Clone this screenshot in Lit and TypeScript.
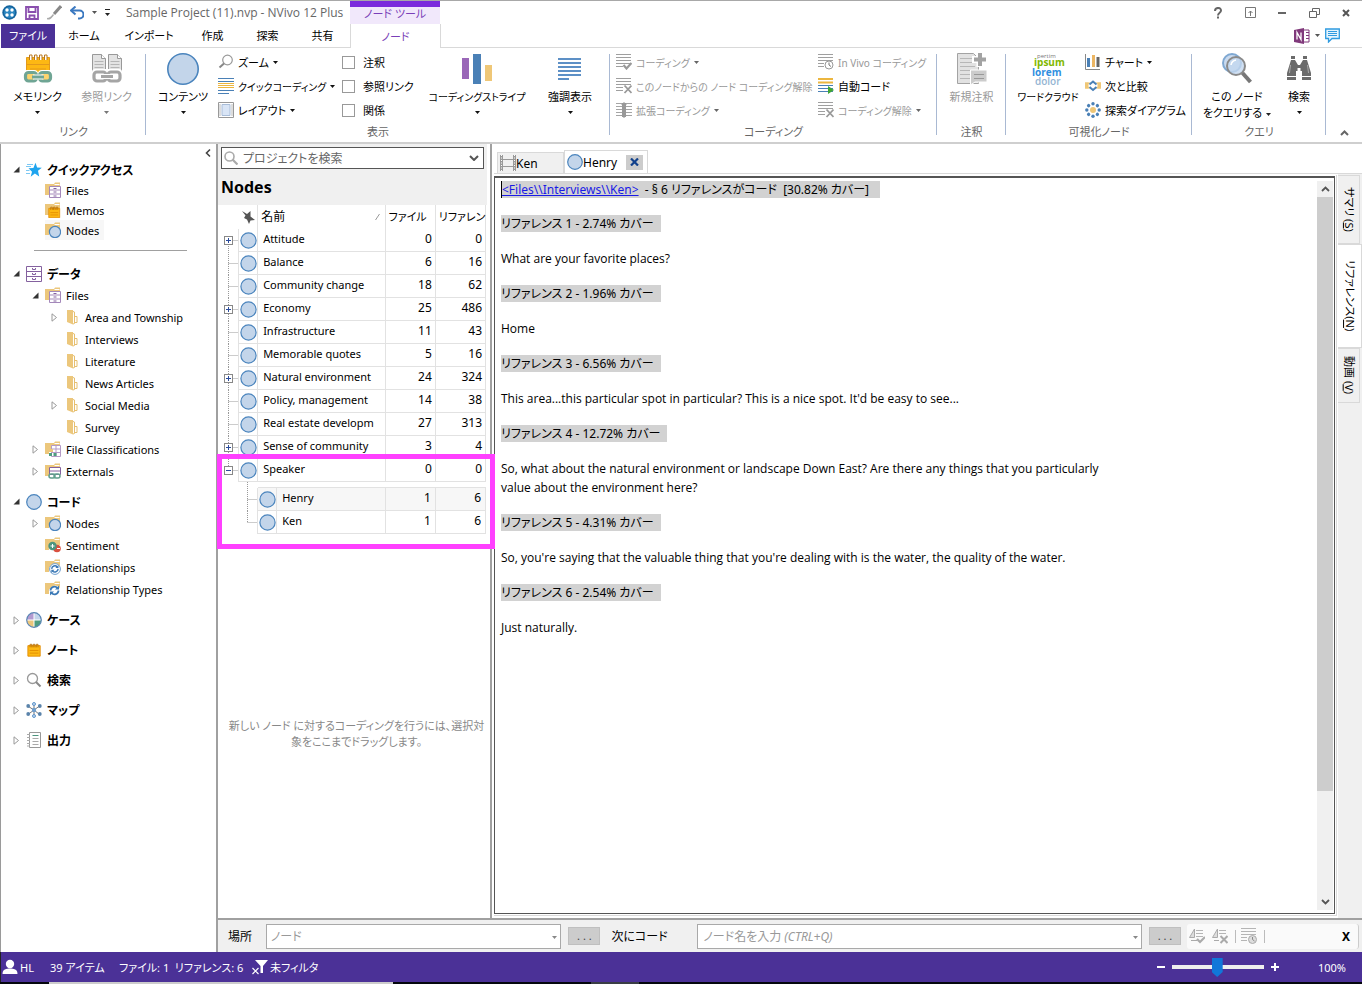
import { LitElement, html, svg, css, nothing } from "lit";
import type { TemplateResult } from "lit";
import { customElement, property, state } from "lit/decorators.js";
import { classMap } from "lit/directives/class-map.js";

const icon = (w: number, h: number, body: unknown, vb = `0 0 ${w} ${h}`) =>
  html`<svg width=${w} height=${h} viewBox=${vb} fill="none" aria-hidden="true">${body}</svg>`;

const lines = (ys: number[], x1: number, x2: number, color: string, w = 1) =>
  ys.map((y) => svg`<path d="M${x1} ${y}H${x2}" stroke=${color} stroke-width=${w} />`);

const folder = svg`<path d="M0 2h9l1-1.5h5V8H4v5H0z" fill="#ecc77c"/><path d="M9.500 2.500h5" stroke="#fff"/>`;
const cabinet = (c: string) => svg`
  <path d="M.5.5h15v15H.5zM.5 5.5h15M.5 10.5h15" fill="#fff" stroke=${c}/>
  <path d="M6.500 2v1.500h3V2M6.500 7v1.500h3V7M6.500 12v1.500h3V12" stroke=${c}/>`;
const circle = (r: number, c: number) =>
  svg`<circle cx=${c} cy=${c} r=${r} fill="#c3d5ea" stroke="#4a84bd" stroke-width="1.200"/>`;
const notepad = svg`
  <path d="M1 3h14v12H1z" fill="#fdb813" stroke="#e08a00"/>
  <path d="M3.500 5V1.500h2V5M7 5V1.500h2V5M10.500 5V1.500h2V5" stroke="#b86f00"/>
  <path d="M3 8.500h10M3 11.500h10" stroke="#e08a00"/>`;
const cycle = svg`
  <path d="M4 8a4 4 0 0 1 7-2.500M12 8a4 4 0 0 1-7 2.500" stroke="#3a78b5" stroke-width="1.800"/>
  <path d="M12.500 3v4h-4zM3.500 13V9h4z" fill="#3a78b5"/>`;

const ICONS: Record<string, () => TemplateResult> = {
  star: () => icon(16, 16, svg`
    <path d="M9.500.8l1.600 4.700 4.700.2-3.800 3 1.200 5.900-4.300-3-4.200 3.200 1.300-5L2.500 6.200l4.900-.3z" fill="#1fa4ee"/>
    <path d="M1 2.500h6M0 4.500h5M0 8.500h3.500M0 11.500h4" stroke="#7cc8f3"/>`),
  cabinet: () => icon(16, 16, cabinet("#84619f")),
  files: () => icon(16, 16, svg`${folder}<path d="M4.500 4.500h11v11h-11zM4.500 8h11M4.500 12h11" fill="#fff" stroke="#a488ba"/><path d="M8.500 6.500h3M8.500 10h3M8.500 14h3" stroke="#84619f"/>`),
  memos: () => icon(16, 16, svg`${folder}<g transform="translate(3 4) scale(.78)">${notepad}</g>`),
  nodes: () => icon(16, 16, svg`${folder}<g transform="translate(4 4)">${circle(5.6, 6)}</g>`),
  classes: () => icon(16, 16, svg`${folder}
    <path d="M6.500 4.500h9v11h-9zM6.500 8h9M6.500 11.500h9M11 4.500v11" fill="#fff" stroke="#b49ac6"/>
    <path d="M4 8h4v3H4z" fill="#ecc77c"/><path d="M4 12h3v3H4zM8.500 12h3v3h-3z" fill="#4f9d7f"/>`),
  externals: () => icon(16, 16, svg`${folder}
    <path d="M4.500 4.500h11v7h-11zM4.500 8h11" fill="#fff" stroke="#84619f"/>
    <rect x="4" y="11" width="6" height="4" rx="2" stroke="#5f9f8c" stroke-width="1.500"/>
    <rect x="9" y="11" width="6" height="4" rx="2" stroke="#5f9f8c" stroke-width="1.500"/>`),
  sentiment: () => icon(16, 16, svg`${folder}
    <circle cx="12" cy="11.500" r="3.800" fill="#d9503f"/><path d="M12 11.500h3" stroke="#fff"/>
    <circle cx="7.500" cy="9" r="4.200" fill="#4d957f"/><path d="M5.500 9h4M7.500 7v4" stroke="#fff"/>`),
  relations: () => icon(16, 16, svg`${folder}
    <circle cx="10" cy="10" r="5.400" fill="#fff" stroke="#6f9fce"/>
    <g transform="translate(3.500 3.500) scale(.8)">${cycle}</g>`),
  reltypes: () => icon(16, 16, svg`${folder}<circle cx="10" cy="10" r="5.500" fill="#fff"/>
    <g transform="translate(1.500 1.500)">${cycle}</g>`),
  folder: () => icon(12, 16, svg`
    <path d="M1 1h6v14.500L1 13z" fill="#ecc77c"/><path d="M7 2.500l1.500.5v11.500L7 15M8.500 7.500h2.500v6h-3" stroke="#e6bf6f"/>`),
  code: () => icon(16, 16, circle(7.3, 8)),
  cases: () => icon(16, 16, svg`
    <path d="M8 8V.7A7.300 7.300 0 0 0 .7 8z" fill="#b29ad0"/><path d="M8 8h7.300A7.300 7.300 0 0 0 8 .7z" fill="#c3d5ea"/>
    <path d="M8 8H.7A7.300 7.300 0 0 0 8 15.300z" fill="#ecc77c"/><path d="M8 8v7.300A7.300 7.300 0 0 0 15.300 8z" fill="#4f9d7f"/>
    <path d="M8 1v14M1 8h14" stroke="#fff"/><circle cx="8" cy="8" r="7.300" stroke="#5a86b5" stroke-width="1.200"/>`),
  note: () => icon(16, 16, svg`<g transform="translate(1 1) scale(.88)">${notepad}</g>`),
  search: () => icon(16, 16, svg`
    <circle cx="6.500" cy="6.500" r="5" stroke="#999" stroke-width="1.300"/><path d="M10 10l4.500 4.500" stroke="#888" stroke-width="2"/>`),
  map: () => icon(16, 16, svg`
    <path d="M8 8L2.500 4.500M8 8l5.500-4M8 8l-6 4.500M8 8l5.500 4.500M8 8V2.500M8 8v5.500" stroke="#777"/>
    <circle cx="8" cy="8" r="2.200" fill="#6f9fce"/>
    ${[[2.2, 4], [13.8, 4], [2.2, 12], [13.8, 12]].map(([x, y]) => svg`<circle cx=${x} cy=${y} r="1.900" fill="#5a83ab"/>`)}
    <circle cx="8" cy="2" r="1.500" fill="#c3d5ea" stroke="#5f97cd"/><circle cx="8" cy="14" r="1.500" fill="#c3d5ea" stroke="#5f97cd"/>`),
  output: () => icon(16, 16, svg`
    <path d="M3.500.5h11v15h-11z" fill="#fff" stroke="#999"/><path d="M1 2.500h3M1 5.500h3M1 8.500h3M1 11.500h3M1 14h3" stroke="#aaa"/>
    <path d="M6.500 3.500h6" stroke="#4d957f"/><path d="M6.500 6.500h6M6.500 9.500h6M6.500 12.500h6" stroke="#aaa"/>`),

  memoLink: () => icon(32, 32, svg`
    <path d="M4.500 4.500h23v18h-23z" fill="#fdb813" stroke="#e39a1b"/>
    <path d="M4.500 11.500h23M8 16h16" stroke="#e39a1b"/>
    ${[7.5, 12.5, 17.5, 22.5].map((x) => svg`<path d="M${x} 7V2h2.500v5" stroke="#b87820" fill="#fff"/>`)}
    <rect x="1" y="17" width="15" height="13" rx="4" fill="#fff"/><rect x="16" y="17" width="15" height="13" rx="4" fill="#fff"/>
    <rect x="3.500" y="19.500" width="11" height="8.500" rx="3" fill="#fdd46e" stroke="#6fa594" stroke-width="3.200"/>
    <rect x="17.500" y="19.500" width="11" height="8.500" rx="3" fill="#fdd46e" stroke="#6fa594" stroke-width="3.200"/>
    <path d="M11 24h10.500" stroke="#fff" stroke-width="5"/><path d="M10 24h12" stroke="#6fa594" stroke-width="3"/>`),
  seeAlso: () => icon(32, 32, svg`
    ${[1.5, 17.5].map((x) => svg`<path d="M${x} 1.500h9l4 4v18h-13z" fill="#e3e3e3" stroke="#999"/>
      <path d="M${x + 9} 1.500v4h4" stroke="#999" fill="#fff"/>
      <path d="M${x + 2} 8.500h9M${x + 2} 11.500h9M${x + 2} 14.500h9" stroke="#b5b5b5"/>`)}
    <rect x="1" y="16" width="30" height="15" rx="3" fill="#fff"/>
    <rect x="3" y="19" width="12" height="9" rx="3" stroke="#a5a5a5" stroke-width="3.200"/>
    <rect x="17" y="19" width="12" height="9" rx="3" stroke="#a5a5a5" stroke-width="3.200"/>
    <path d="M11 23.500h10" stroke="#fff" stroke-width="5"/><path d="M10 23.500h12" stroke="#a5a5a5" stroke-width="3"/>`),
  content: () => icon(32, 32, svg`<circle cx="16" cy="16" r="15.200" fill="#c3d5ea" stroke="#4a84bd" stroke-width="1.600"/>`),
  stripes: () => icon(32, 32, svg`
    <path d="M1 5h7v21H1z" fill="#9a67b8"/><path d="M12 1h8v30h-8z" fill="#4a80b6"/><path d="M24 12h7v16h-7z" fill="#efc777"/>`),
  highlight: () => icon(24, 32, svg`${lines([6, 10, 14, 18, 22], 0, 23, "#5d90c6", 2)}<path d="M0 26h11" stroke="#5d90c6" stroke-width="2"/>`),
  newAnno: () => icon(32, 32, svg`
    <path d="M1.500.5h16l5 5v25h-21z" fill="#e2e2e2" stroke="#a3a3a3"/>
    ${lines([5.5, 9.5, 13.5, 17.5, 21.5, 25.5], 4, 19, "#b7b7b7")}
    <path d="M24 -1v15M16 6.500h15" stroke="#fff" stroke-width="7"/><path d="M24 0v13M18 6.500h12" stroke="#a3a3a3" stroke-width="4"/>
    <path d="M14.500 17h16.500v12H19l-4.500 3z" fill="#ccc" stroke="#fff"/>${lines([21.5, 25.5], 18, 28, "#999")}`),
  cloud: () => html`<svg class="spill" width="34" height="34" viewBox="0 0 34 34" aria-hidden="true">
    <text font-family="Open Sans, sans-serif" font-size="10" font-weight="700">
      <tspan x="6" y="5" font-size="6" font-weight="400" fill="#777">pertim</tspan><tspan x="3" y="13" fill="#7fb800">ipsum</tspan><tspan x="1" y="23" fill="#2f8fe0">lorem</tspan><tspan x="4" y="32" font-weight="600" fill="#93b4d2">dolor</tspan>
    </text></svg>`,
  query: () => icon(32, 32, svg`
    <circle cx="11" cy="10" r="9" fill="#c9daef" stroke="#7fa8d2" stroke-width="2"/>
    <circle cx="15" cy="13" r="9" fill="#c3d7ef" fill-opacity=".8" stroke="#8a8a8a" stroke-width="2"/>
    <path d="M10 12a6 6 0 0 1 5-5" stroke="#fff" stroke-width="1.500"/><path d="M21.500 20l8 9" stroke="#777" stroke-width="4"/>`),
  binoculars: () => icon(32, 32, svg`
    <path d="M8 3h4v4l3 5h2l3-5V3h4v4l4 13v7h-9v-9h-1.500v-3h-3v3H13v9H4v-7l4-13z" fill="#6b6b6b"/>
    <path d="M7.500 6.500h5M19.500 6.500h5M4 23.500h9M19 23.500h9" stroke="#fff"/><path d="M7.500 12l-1 8M24.500 12l1 8" stroke="#aaa"/>`),

  zoom: () => icon(16, 16, svg`
    <circle cx="9.500" cy="6" r="4.800" stroke="#999" stroke-width="1.200"/><path d="M6 9.500l-4.500 4" stroke="#888" stroke-width="2"/>`),
  quick: () => icon(16, 16, svg`${lines([.5, 3.5, 12.5], 0, 16, "#4a80b6")}${lines([5.5, 7.5, 9.5], 0, 16, "#ecb63f")}<path d="M0 15.500h11" stroke="#4a80b6"/>`),
  layout: () => icon(16, 16, svg`<path d="M.5.500h15v15H.5z" fill="#fff" stroke="#999"/><path d="M4 2.500h8v11H4z" fill="#d9e5f6" stroke="#a9bdd8"/><path d="M2 2v12M14 2v12" stroke="#bbb"/>`),
  grayCheck: () => icon(16, 16, svg`${lines([.5, 3.5, 6.5, 9.5], 0, 15, "#9f9f9f")}<path d="M0 12.500h7" stroke="#9f9f9f"/><path d="M7.500 11l3 3.500L15.500 9" stroke="#999" stroke-width="2.200"/>`),
  grayX: () => icon(16, 16, svg`${lines([.5, 3.5, 6.5], 0, 15, "#9f9f9f")}<path d="M0 9.500h7M0 12.500h7" stroke="#9f9f9f"/><path d="M8.500 7.500l7 7.500M15.500 7.500l-7 7.500" stroke="#999" stroke-width="1.800"/>`),
  spread: () => icon(16, 16, svg`${lines([1.5, 4.5, 7.5, 10.5, 13.5], 0, 16, "#a5a5a5")}<path d="M8 1v14" stroke="#999" stroke-width="4"/><path d="M5 3l3-3 3 3zM5 13l3 3 3-3z" fill="#999"/>`),
  invivo: () => icon(16, 16, svg`${lines([.5, 3.5, 6.5], 0, 15, "#9f9f9f")}<path d="M0 9.500h6M0 12.500h6" stroke="#9f9f9f"/><circle cx="11" cy="11" r="4" fill="#fff" stroke="#999"/><path d="M11 8.500V11l2 1.500" stroke="#777"/>`),
  autocode: () => icon(16, 16, svg`${lines([1, 4.5], 0, 15, "#ecb63f", 2)}${lines([7.5, 10.5, 13.5], 0, 15, "#4a80b6")}<path d="M10 8l6 4-6 4z" fill="#3fa535"/>`),
  chart: () => icon(16, 16, svg`<path d="M.5 0v15.500H15" stroke="#888"/><path d="M2 4h3v9H2z" fill="#4a80b6"/><path d="M7 1h3v12H7z" fill="#ecb663"/><path d="M11.500 3h3v10h-3z" fill="#666"/>`),
  compare: () => icon(16, 16, svg`<path d="M0 4.500h6v6H0zM10 4.500h6v6h-6z" fill="#efc777"/><path d="M8 2l6 5.500L8 13 2 7.500z" fill="#fff"/><path d="M0 4.500h3.500v6H0zM12.500 4.500H16v6h-3.500z" fill="#efc777"/><path d="M4.500 6.500L8 3.500l3.500 3M4.500 9L8 12l3.500-3" stroke="#4a80b6" stroke-width="2"/>`),
  explore: () => icon(16, 16, svg`<circle cx="8" cy="8" r="3" fill="#efc777"/>
    ${[0, 45, 90, 135, 180, 225, 270, 315].map((a) => svg`<circle cx="8" cy="1.800" r="1.700" fill="#4a80b6" transform="rotate(${a} 8 8)"/>`)}`),
  person: () => icon(16, 16, svg`<circle cx="8" cy="5" r="4.200" fill="#fff"/><path d="M.5 15c0-5 4-5.500 7.500-5.500s7.500.5 7.500 5.500z" fill="#fff"/>`),
  filter: () => icon(16, 16, svg`<path d="M3 1h13l-5 6v7H8.500V7z" fill="#fff"/><path d="M.5 9l6 6M6.500 9l-6 6" stroke="#fff" stroke-width="1.200"/>`),
  film: () => icon(16, 16, svg`<path d="M1.500 0v16M14.500 0v16" stroke="#999" stroke-width="3"/><path d="M1.500 0v16M14.500 0v16" stroke="#fff" stroke-dasharray="1 1.500"/><path d="M3 4.500h10M3 11.500h10" stroke="#999"/>`),
  barCheck: () => icon(16, 16, svg`<path d="M.5 9.500L5.500 1v8.500z" stroke="#aaa" fill="#ddd"/>${lines([2.5, 5.5, 8.5], 7, 14, "#b5b5b5")}<path d="M2 12.500h6" stroke="#aaa"/><path d="M8 11l3 3 5-5" stroke="#aaa" stroke-width="2.200"/>`),
  barX: () => icon(16, 16, svg`<path d="M.5 9.500L5.500 1v8.500z" stroke="#aaa" fill="#ddd"/>${lines([2.5, 5.5], 7, 14, "#b5b5b5")}<path d="M2 12.500h5" stroke="#aaa"/><path d="M8.500 8l7 7M15.500 8l-7 7" stroke="#aaa" stroke-width="2"/>`),
  barVivo: () => icon(16, 16, svg`${lines([.5, 3.5, 6.5], 0, 15, "#b5b5b5")}<path d="M0 9.500h6M0 12.500h6" stroke="#b5b5b5"/><circle cx="11.500" cy="11.500" r="4" fill="#ddd" stroke="#aaa"/><path d="M11.500 9v2.500l2 1.500" stroke="#888"/>`),
};

const down = (c = "#222") => html`<svg width="5" height="3" viewBox="0 0 5 3" aria-hidden="true"><path d="M0 0h5L2.500 3z" fill=${c} /></svg>`;

const base = css`
  :host { display: block; box-sizing: border-box; }
  * { box-sizing: border-box; }
  svg { display: block; flex: none; }
  button, input, select {
    font: inherit; color: inherit; margin: 0; padding: 0; border: 0; background: none;
    font-feature-settings: inherit; border-radius: 0;
  }
`;

/* ---------- Title bar and tabs ---------- */
@customElement("title-area")
class TitleArea extends LitElement {
  static styles = [base, css`
    .title { display: flex; height: 24px; border-top: 1px solid #a8a8a8; }
    .quick { display: flex; align-items: center; width: 350px; padding-left: 2px; }
    .quick button { display: flex; margin-right: 8px; }
    .name { color: #666; font-family: "Open Sans", sans-serif; font-size: 12px; margin-left: 8px; white-space: nowrap; }
    .context { width: 90px; border-top: 6px solid #7b2bdc; background: #f1e8fb; color: #7a3fb8; text-align: center; line-height: 13px; }
    .win { display: flex; margin-left: auto; }
    .win button { width: 32px; display: grid; place-items: center; }
    .tabs { display: flex; height: 24px; padding-left: 1px; }
    .tabs button { border-bottom: 1px solid #d9d9d9; line-height: 23px; white-space: nowrap; }
    .tabs .file { width: 54px; background: #4b3197; color: #fff; border-color: #4b3197; }
    .t58 { width: 58px; } .t72 { width: 72px; } .t55 { width: 55px; }
    .tabs .on { width: 91px; color: #7a3fb8; border: 1px solid #d9d9d9; border-width: 0 1px; }
    .rest { flex: 1; border-bottom: 1px solid #d9d9d9; display: flex; justify-content: flex-end; align-items: center; gap: 5px; padding-right: 22px; }
    .rest button { border: 0; }
  `];
  render() {
    return html`
      <div class="title">
        <div class="quick">
          <button aria-label="NVivo">${icon(15, 15, svg`<circle cx="7.500" cy="7.500" r="7.200" fill="#14649e"/><circle cx="7.500" cy="7.500" r="5.500" fill="#2b86c0"/>
            ${[[5, 5], [10, 5], [5, 10], [10, 10]].map(([x, y]) => svg`<circle cx=${x} cy=${y} r="1.700" fill="#fff"/>`)}`)}</button>
          <button aria-label="保存">${icon(14, 14, svg`<path d="M1 1h12v12H1zM3.500 1v5h7V1M4.500 13V9.500h5V13" stroke="#8a4fae" stroke-width="1.800"/>`)}</button>
          <button aria-label="編集">${icon(15, 15, svg`<path d="M14 1L7 9" stroke="#888" stroke-width="3"/><path d="M0 13.500c3 1 4-1 6.500-4" stroke="#aaa" stroke-width="1.500"/>`)}</button>
          <button aria-label="元に戻す">${icon(14, 14, svg`<path d="M1 4.500h8.500a4 4 0 0 1 0 8H8" stroke="#3a78c0" stroke-width="2"/><path d="M5.500.5L1 4.500l4.500 4" stroke="#3a78c0" stroke-width="2"/>`)}</button>
          <button aria-label="履歴">${down("#555")}</button>
          <button aria-label="カスタマイズ">${icon(5, 7, svg`<path d="M0 .5h5" stroke="#222"/><path d="M0 4h5L2.500 7z" fill="#222"/>`)}</button>
          <span class="name">Sample Project (11).nvp - NVivo 12 Plus</span>
        </div>
        <div class="context">ノード ツール</div>
        <div class="win">
          <button aria-label="ヘルプ">${icon(10, 12, svg`<path d="M2 4c0-4 6-4 6-.5C8 6 5 5.500 5 8.500M5 9.500v2" stroke="#666" stroke-width="2"/>`)}</button>
          <button aria-label="リボン表示">${icon(11, 11, svg`<path d="M.5.5h10v10H.5zM5.500 9V4M3.500 6l2-2 2 2" stroke="#777"/>`)}</button>
          <button aria-label="最小化">${icon(8, 2, svg`<path d="M0 1h8" stroke="#666" stroke-width="2"/>`)}</button>
          <button aria-label="元のサイズ">${icon(11, 10, svg`<path d="M3.500 3V.5h7v6H8M.5 3.500h7v6h-7z" stroke="#666"/>`)}</button>
          <button aria-label="閉じる">${icon(8, 8, svg`<path d="M1 1l6 6M7 1L1 7" stroke="#555" stroke-width="2"/>`)}</button>
        </div>
      </div>
      <div class="tabs">
        <button class="file">ファイル</button><button class="t58">ホーム</button><button class="t72">インポート</button>
        <button class="t55">作成</button><button class="t55">探索</button><button class="t55">共有</button><button class="on">ノード</button>
        <div class="rest">
          <button aria-label="OneNote">${icon(16, 16, svg`<path d="M9 2h6v12H9z" fill="#fff" stroke="#80397b"/><path d="M12 4.500h3M12 7.500h3M12 10.500h3" stroke="#80397b"/><path d="M0 2l10-2v16L0 14z" fill="#80397b"/><path d="M3 11.500v-7l4 7v-7" stroke="#fff" stroke-width="1.300"/>`)}</button>
          ${down("#555")}
          <button aria-label="コメント">${icon(15, 15, svg`<path d="M.7 1h13.600v9.500H7l-3.500 3.500v-3.500H.7z" stroke="#2f9be0" fill="#e6f4fd" stroke-width="1.300"/><path d="M3 3.500h9M3 5.500h9M3 7.500h9" stroke="#2f9be0"/>`)}</button>
        </div>
      </div>`;
  }
}

/* ---------- Ribbon ---------- */
type Opts = { off?: boolean; menu?: boolean; dense?: boolean };
const big = (ic: string, label: unknown, { off = false, menu = true, dense = false }: Opts = {}) => html`
  <button class=${classMap({ big: true, off, dense })} ?disabled=${off}>
    <span class="pic">${ICONS[ic]()}</span><span class="lab">${label}</span>
    ${menu ? down(off ? "#777" : "#111") : nothing}
  </button>`;
const small = (ic: string, label: string, { off = false, menu = false, dense = false }: Opts = {}) => html`
  <button class=${classMap({ small: true, off, dense })} ?disabled=${off}>
    ${ICONS[ic]()}<span>${label}</span>${menu ? down(off ? "#666" : "#111") : nothing}
  </button>`;

@customElement("ribbon-bar")
class RibbonBar extends LitElement {
  static styles = [base, css`
    :host { border-bottom: 2px solid #cfcfcf; padding-left: 1px; }
    .groups { display: grid; grid-template-columns: 145px 464px 327px 69px 186px 134px 1fr; height: 94px; }
    .group { display: grid; grid-template-rows: 74px 18px; padding-top: 2px; position: relative; min-width: 0; }
    .group::after { content: ""; position: absolute; right: 0; top: 6px; height: 81px; border-right: 1px solid #a9b9d3; }
    .cap { text-align: center; color: #666; line-height: 16px; }
    .body { display: grid; white-space: nowrap; }
    .link { grid-template-columns: 69px 69px; padding-left: 2px; }
    .view { grid-template-columns: 67px 124px 82px 106px 80px; padding-left: 5px; }
    .coding { grid-template-columns: 202px 1fr; padding-left: 6px; }
    .vis { grid-template-columns: 74px 1fr; padding-left: 5px; }
    .query { grid-template-columns: 78px 46px; padding-left: 6px; }
    .big { display: flex; flex-direction: column; align-items: center; padding-top: 3px; }
    .view .big:first-child { width: 64px; }
    .pic { height: 36px; display: grid; place-items: start center; }
    .spill { overflow: visible; }
    .lab { line-height: 16px; height: 22px; text-align: center; }
    .two { margin-left: 4px; display: inline-block; vertical-align: middle; }
    .off { color: #999; }
    .dense { font-size: 10px; }
    .col { display: grid; grid-template-rows: repeat(3, 24px); }
    .small, .check { display: flex; align-items: center; gap: 4px; text-align: left; }
    .check { gap: 8px; }
    .check input { appearance: none; width: 13px; height: 13px; border: 1px solid #999; background: #fff; flex: none; }
    .end { display: flex; align-items: flex-end; justify-content: flex-end; padding: 0 12px 6px; }
    .end button { width: 10px; }
  `];
  render() {
    return html`<div class="groups">
      <section class="group"><div class="body link">
        ${big("memoLink", "メモリンク")}${big("seeAlso", "参照リンク", { off: true })}
      </div><div class="cap">リンク</div></section>
      <section class="group"><div class="body view">
        ${big("content", "コンテンツ")}
        <div class="col">${small("zoom", "ズーム", { menu: true })}${small("quick", "クイックコーディング", { menu: true, dense: true })}${small("layout", "レイアウト", { menu: true })}</div>
        <div class="col">${["注釈", "参照リンク", "関係"].map((t) => html`<label class="check"><input type="checkbox">${t}</label>`)}</div>
        ${big("stripes", "コーディングストライプ", { dense: true })}${big("highlight", "強調表示")}
      </div><div class="cap">表示</div></section>
      <section class="group"><div class="body coding">
        <div class="col">${small("grayCheck", "コーディング", { off: true, menu: true, dense: true })}${small("grayX", "このノードからの ノード コーディング解除", { off: true, dense: true })}${small("spread", "拡張コーディング", { off: true, menu: true, dense: true })}</div>
        <div class="col">${small("invivo", "In Vivo コーディング", { off: true, dense: true })}${small("autocode", "自動コード")}${small("grayX", "コーディング解除", { off: true, menu: true, dense: true })}</div>
      </div><div class="cap">コーディング</div></section>
      <section class="group"><div class="body">${big("newAnno", "新規注釈", { off: true, menu: false })}</div><div class="cap">注釈</div></section>
      <section class="group"><div class="body vis">
        ${big("cloud", "ワードクラウド", { menu: false, dense: true })}
        <div class="col">${small("chart", "チャート", { menu: true })}${small("compare", "次と比較")}${small("explore", "探索ダイアグラム")}</div>
      </div><div class="cap">可視化ノード</div></section>
      <section class="group"><div class="body query">
        ${big("query", html`この ノード<br>をクエリする<span class="two">${down()}</span>`, { menu: false })}
        ${big("binoculars", "検索")}
      </div><div class="cap">クエリ</div></section>
      <div class="end"><button aria-label="リボンを折りたたむ">${icon(9, 6, svg`<path d="M1 5l3.500-3.500L8 5" stroke="#666" stroke-width="2"/>`)}</button></div>
    </div>`;
  }
}

/* ---------- Navigation ---------- */
type Item = { t: string; ic: string; lv: number; ex?: "open" | "closed"; on?: boolean };
const QUICK: Item[] = [
  { t: "Files", ic: "files", lv: 1 }, { t: "Memos", ic: "memos", lv: 1 }, { t: "Nodes", ic: "nodes", lv: 1, on: true },
];
const DATA: Item[] = [
  { t: "Files", ic: "files", lv: 1, ex: "open" },
  { t: "Area and Township", ic: "folder", lv: 2, ex: "closed" }, { t: "Interviews", ic: "folder", lv: 2 },
  { t: "Literature", ic: "folder", lv: 2 }, { t: "News Articles", ic: "folder", lv: 2 },
  { t: "Social Media", ic: "folder", lv: 2, ex: "closed" }, { t: "Survey", ic: "folder", lv: 2 },
  { t: "File Classifications", ic: "classes", lv: 1, ex: "closed" }, { t: "Externals", ic: "externals", lv: 1, ex: "closed" },
];
const CODES: Item[] = [
  { t: "Nodes", ic: "nodes", lv: 1, ex: "closed" }, { t: "Sentiment", ic: "sentiment", lv: 1 },
  { t: "Relationships", ic: "relations", lv: 1 }, { t: "Relationship Types", ic: "reltypes", lv: 1 },
];
const REST = [["ケース", "cases"], ["ノート", "note"], ["検索", "search"], ["マップ", "map"], ["出力", "output"]];

const arrow = (ex?: "open" | "closed") =>
  ex === "open" ? icon(7, 7, svg`<path d="M6.500.5v6h-6z" fill="#333"/>`)
  : ex === "closed" ? icon(7, 9, svg`<path d="M1 .8v7.400L5.500 4.500z" stroke="#999" fill="#fff"/>`) : nothing;

@customElement("nav-pane")
class NavPane extends LitElement {
  static styles = [base, css`
    :host { position: relative; padding-top: 15px; border-left: 1px solid #9a9a9a; border-right: 2px solid #a0a0a0; background: #fff; overflow: hidden; }
    .fold { position: absolute; right: 5px; top: 4px; }
    .head, .item { display: flex; align-items: center; width: 100%; white-space: nowrap; }
    .head { font-weight: 700; font-size: 12px; height: 21px; padding-left: 12px; }
    .tall { height: 30px; }
    .tw { width: 7px; margin-right: 6px; flex: none; display: grid; place-items: center; }
    .head span:last-child { margin-left: 5px; }
    .item { height: 22px; padding-left: 31px; }
    .item .nm { padding: 0 5px; }
    .quick .item { height: 20px; }
    .on .bg { background: #f7f7f7; }
    .bg { display: flex; align-items: center; height: 20px; }
    .lv2 { padding-left: 50px; }
    .lv2 .bg { padding-left: 2px; }
    .lv2 .nm { padding-left: 7px; }
    hr { margin: 10px 29px 12px 33px; border: 0; border-top: 1px solid #a0a0a0; }
    .code { margin-top: 9px; }
    .rest { margin-top: 5px; }
  `];
  head(t: string, ic: string, ex: "open" | "closed", tall = false) {
    return html`<button class=${classMap({ head: true, tall })}><span class="tw">${arrow(ex)}</span>${ICONS[ic]()}<span>${t}</span></button>`;
  }
  item(i: Item) {
    return html`<button class=${classMap({ item: true, lv2: i.lv === 2, on: !!i.on })}><span class="tw">${arrow(i.ex)}</span>
      <span class="bg">${ICONS[i.ic]()}<span class="nm">${i.t}</span></span></button>`;
  }
  render() {
    return html`
      <button class="fold" aria-label="折りたたむ">${icon(6, 10, svg`<path d="M5 1.500L1.500 5 5 8.500" stroke="#444" stroke-width="1.600"/>`)}</button>
      <div class="quick">${this.head("クイックアクセス", "star", "open")}${QUICK.map((i) => this.item(i))}</div>
      <hr>
      <div>${this.head("データ", "cabinet", "open")}${DATA.map((i) => this.item(i))}</div>
      <div class="code">${this.head("コード", "code", "open")}${CODES.map((i) => this.item(i))}</div>
      <div class="rest">${REST.map(([t, ic]) => this.head(t, ic, "closed", true))}</div>`;
  }
}

/* ---------- Node list ---------- */
type NodeRow = { n: string; f: number; r: number; box?: "plus" | "minus" };
const NODES: NodeRow[] = [
  { n: "Attitude", f: 0, r: 0, box: "plus" }, { n: "Balance", f: 6, r: 16 }, { n: "Community change", f: 18, r: 62 },
  { n: "Economy", f: 25, r: 486, box: "plus" }, { n: "Infrastructure", f: 11, r: 43 }, { n: "Memorable quotes", f: 5, r: 16 },
  { n: "Natural environment", f: 24, r: 324, box: "plus" }, { n: "Policy, management", f: 14, r: 38 },
  { n: "Real estate developm", f: 27, r: 313 }, { n: "Sense of community", f: 3, r: 4, box: "plus" },
  { n: "Speaker", f: 0, r: 0, box: "minus" },
];
const dot = icon(17, 17, svg`<circle cx="8.500" cy="8.500" r="7.600" fill="#c3d5ea" stroke="#4a84bd" stroke-width="1.200"/>`);

@customElement("node-list")
class NodeList extends LitElement {
  @property({ attribute: false }) rows: NodeRow[] = NODES;
  static styles = [base, css`
    :host { position: relative; border-right: 2px solid #a0a0a0; background: #fff; min-width: 0; }
    .top { background: #f0f0f0; height: 61px; padding: 3px 3px 0; margin-right: 3px; }
    .search { display: flex; align-items: center; height: 22px; border: 1px solid #555; background: #fff; padding: 0 4px 0 2px; }
    .search input { flex: 1; min-width: 0; padding-left: 5px; outline: 0; font-size: 12px; }
    .search input::placeholder { color: #666; opacity: 1; }
    h2 { margin: 0; font-size: 16px; line-height: 36px; font-weight: 700; }
    table { border-spacing: 0; table-layout: fixed; width: 268px; line-height: 18px; }
    .c21 { width: 21px; } .c19 { width: 19px; } .c108 { width: 108px; } .c50 { width: 50px; }
    th { font-weight: 400; text-align: left; height: 24px; padding: 0 0 0 3px; border-right: 1px solid #e2e2e2; white-space: nowrap; }
    th.bare { border: 0; padding: 0; }
    .name { display: flex; align-items: center; justify-content: space-between; padding-right: 5px; font-size: 12px; }
    td { height: 23px; padding: 0; border-right: 1px solid #e2e2e2; border-bottom: 1px solid #e2e2e2; }
    td.n { padding: 0 0 2px 5px; white-space: nowrap; }
    td.v { text-align: right; padding: 0 3px 2px 0; font-size: 12px; }
    td.tree { border-bottom: 0; vertical-align: top; }
    td.tree svg { overflow: visible; }
    td.dot svg { margin: auto; }
    .gap td { height: 6px; border-right: 0; }
    .gap .tree, .sub .none { border: 0; }
    .sub .sel { background: #f7f7f7; }
    .sub .v { padding-right: 4px; }
    .hint { color: #888; text-align: center; line-height: 16px; padding: 184px 3px 0 8px; white-space: nowrap; }
    .mark { position: absolute; left: -1px; right: -5px; top: 310px; height: 95px; border: 5px solid #ff40ff; z-index: 2; }
  `];
  tree(n: NodeRow, i: number) {
    const top = i === 0 ? 11 : 0, bottom = i === this.rows.length - 1 ? 11 : 23;
    return icon(20, 23, svg`
      <path d="M10.500 ${top}V${bottom}M10.500 11.500h9" stroke="#999" stroke-dasharray="1 1"/>
      ${n.box ? svg`<rect x="6.500" y="7.500" width="8" height="8" fill="#fff" stroke="#888"/><path d="M8 11.500h5${n.box === "plus" ? "M10.500 9v5" : ""}" stroke="#2a4b9b"/>` : nothing}`);
  }
  sub(n: string, sel: boolean) {
    const c = sel ? "sel" : "";
    return html`<tr class="sub"><td class="none"></td>
      <td class="tree">${icon(18, 23, svg`<path d="M8.500 ${sel ? -6 : 0}V${sel ? 23 : 11}M8.500 11.500h9" stroke="#999" stroke-dasharray="1 1"/>`)}</td>
      <td class="dot ${c}">${dot}</td><td class="n ${c}">${n}</td><td class="v ${c}">1</td><td class="v ${c}">6</td></tr>`;
  }
  render() {
    return html`
      <div class="top">
        <div class="search">${icon(14, 14, svg`<circle cx="5.500" cy="5.500" r="4.500" stroke="#aaa" stroke-width="1.600"/><path d="M8.500 8.500l5 5" stroke="#aaa" stroke-width="2.200"/>`)}
          <input type="text" aria-label="プロジェクトを検索" placeholder="プロジェクトを検索">
          ${icon(10, 6, svg`<path d="M1 1l4 4 4-4" stroke="#555" stroke-width="2"/>`)}</div>
        <h2>Nodes</h2>
      </div>
      <table>
        <colgroup><col class="c21"><col class="c19"><col class="c19"><col class="c108"><col class="c50"><col class="c50"></colgroup>
        <thead><tr><th class="bare"></th><th aria-label="種類">${icon(13, 14, svg`<path d="M0 1l5 3 3.500-3v5.500L13 10l-4.500.5L7 14l-2-4.500L2 8l1.500-2.500z" fill="#555"/>`)}</th>
          <th colspan="2"><span class="name">名前${icon(5, 6, svg`<path d="M4.500 0l-4 6" stroke="#999"/>`)}</span></th><th>ファイル</th><th>リファレン</th></tr></thead>
        <tbody>
          ${this.rows.map((n, i) => html`<tr><td class="tree">${this.tree(n, i)}</td><td class="dot">${dot}</td>
            <td class="n" colspan="2">${n.n}</td><td class="v">${n.f}</td><td class="v">${n.r}</td></tr>`)}
          <tr class="gap"><td class="tree"></td><td class="tree"></td><td colspan="4"></td></tr>
          ${this.sub("Henry", true)}${this.sub("Ken", false)}
        </tbody>
      </table>
      <div class="hint">新しい ノード に対するコーディングを行うには、選択対<br>象をここまでドラッグします。</div>
      <div class="mark"></div>`;
  }
}

/* ---------- Detail view ---------- */
const REFS: [string, string[]][] = [
  ["リファレンス 1 - 2.74% カバー", ["What are your favorite places?"]],
  ["リファレンス 2 - 1.96% カバー", ["Home"]],
  ["リファレンス 3 - 6.56% カバー", ["This area...this particular spot in particular? This is a nice spot. It'd be easy to see..."]],
  ["リファレンス 4 - 12.72% カバー", ["So, what about the natural environment or landscape Down East? Are there any things that you particularly", "value about the environment here?"]],
  ["リファレンス 5 - 4.31% カバー", ["So, you're saying that the valuable thing that you're dealing with is the water, the quality of the water."]],
  ["リファレンス 6 - 2.54% カバー", ["Just naturally."]],
];

@customElement("detail-view")
class DetailView extends LitElement {
  @state() private tab = "リファレンス";
  static styles = [base, css`
    :host { display: grid; grid-template: 30px 1fr / 1fr 25px; min-width: 0; background: #fff; padding-left: 2px; }
    .tabs { grid-column: 1 / 3; display: flex; align-items: flex-end; border-bottom: 1px solid #d9d9d9; padding-left: 3px; font-size: 12px; }
    .tab { display: flex; align-items: center; border: 1px solid #d9d9d9; border-bottom: 0; height: 21px; background: #f0f0f0; width: 67px; padding-left: 2px; }
    .tab.on { height: 23px; width: 84px; background: #fff; padding: 0 4px 0 2px; }
    .tab.on button:last-child { margin-left: auto; width: 17px; height: 15px; background: #ccc; display: grid; place-items: center; }
    .tab button { display: flex; align-items: center; }
    .frame { border: 1px solid #d9d9d9; border-width: 0 1px 1px 0; margin: 1px 0 2px; padding: 1px 1px 1px 0; background: #fff; display: grid; min-height: 0; }
    .doc { border: 1px solid #555; border-top-width: 2px; display: grid; grid-template-columns: 1fr 18px; min-height: 0; }
    article { padding: 3px 6px 0; font-size: 12px; overflow: hidden; }
    .ref { line-height: 17px; margin: 0 0 17px; white-space: nowrap; }
    .ref span { background: #d2d2d2; display: inline-block; padding-right: 7px; height: 17px; }
    .ref a { color: #1a1ae6; }
    .ref .caret { border-left: 1px solid #000; padding-right: 11px; }
    .txt { font-family: "Open Sans", sans-serif; line-height: 19px; margin: 0 0 17px; }
    .scroll { display: grid; grid-template-rows: 16px 594px 1fr 16px; background: #f0f0f0; margin: 3px 1px 3px 1px; }
    .scroll button { display: grid; place-items: center; }
    .thumb { background: #cdcdcd; }
    .side { background: #f0f0f0; display: flex; flex-direction: column; margin-left: 1px; padding-top: 1px; }
    .side button { writing-mode: vertical-rl; text-orientation: sideways; width: 22px; height: 69px; border: 1px solid #d9d9d9; border-left: 0; background: #f0f0f0; margin-right: auto; line-height: 20px; white-space: pre; }
    .side .on { background: #fff; width: 24px; height: 104px; }
    .side .last { height: 55px; }
  `];
  render() {
    const side = [["サマリ", "S", " "], ["リファレンス", "N", ""], ["動画", "V", " "]];
    return html`
      <div class="tabs">
        <div class="tab"><button>${ICONS.film()}Ken</button></div>
        <div class="tab on"><button>${ICONS.code()}Henry</button><button aria-label="閉じる">${icon(9, 8, svg`<path d="M1 .5l7 7M8 .5l-7 7" stroke="#12418c" stroke-width="2.200"/>`)}</button></div>
      </div>
      <div class="frame"><div class="doc">
        <article>
          <p class="ref"><span class="caret"><a href="#ken">&lt;Files\\\\Interviews\\\\Ken&gt;</a> &nbsp;- § 6 リファレンスがコード&nbsp; [30.82% カバー]</span></p>
          ${REFS.map(([h, t]) => html`<p class="ref"><span>${h}</span></p><p class="txt">${t.map((l, i) => html`${i ? html`<br>` : nothing}${l}`)}</p>`)}
        </article>
        <div class="scroll">
          <button aria-label="上へ">${icon(9, 6, svg`<path d="M1 5l3.500-3.500L8 5" stroke="#555" stroke-width="1.800"/>`)}</button>
          <div class="thumb"></div><div></div>
          <button aria-label="下へ">${icon(9, 6, svg`<path d="M1 1l3.500 3.500L8 1" stroke="#555" stroke-width="1.800"/>`)}</button>
        </div>
      </div></div>
      <div class="side">${side.map(([t, k, sp]) => html`<button class=${classMap({ on: this.tab === t, last: k === "V" })}
        @click=${() => { this.tab = t; }}>${t}${sp}(<u>${k}</u>)</button>`)}</div>`;
  }
}

/* ---------- Quick coding bar ---------- */
@customElement("coding-bar")
class CodingBar extends LitElement {
  static styles = [base, css`
    :host { display: flex; align-items: center; height: 34px; border-top: 2px solid #a0a0a0; background: #f0f0f0; padding: 0 3px 0 10px; }
    label { font-size: 12px; white-space: nowrap; }
    .l1 { width: 38px; } .l2 { width: 86px; margin-left: 11px; }
    .combo { position: relative; height: 25px; border: 1px solid #a9a9a9; background: #fff; }
    .combo svg { position: absolute; right: 3px; top: 11px; pointer-events: none; }
    .combo select, .combo input { appearance: none; width: 100%; height: 100%; padding: 0 4px; color: #999; font-size: 12px; outline: 0; }
    .combo input { font-style: italic; font-synthesis: none; padding-left: 5px; }
    .combo input::placeholder { color: #999; opacity: 1; }
    .a { flex: 295 1 0; } .b { flex: 445 1 0; }
    .dots { width: 32px; height: 18px; background: #ccc; border: 1px solid #bfbfbf; color: #444; margin-left: 7px; line-height: 12px; }
    .tools { display: flex; align-items: center; height: 25px; width: 172px; margin-left: 6px; padding: 0 8px 0 2px; border-radius: 3px; background: #fafafa; border-right: 1px solid #ccc; }
    .tools button { display: grid; margin-right: 7px; }
    .tools i { width: 1px; height: 13px; background: #bbb; margin-right: 5px; }
    .tools .x { margin: 0 0 0 auto; font-weight: 700; font-size: 12px; color: #000; }
  `];
  render() {
    return html`
      <label class="l1" for="place">場所</label>
      <div class="combo a"><select id="place"><option>ノード</option></select>${down("#888")}</div>
      <button class="dots" aria-label="場所を選択">. . .</button>
      <label class="l2" for="codeat">次にコード</label>
      <div class="combo b"><input id="codeat" type="text" placeholder="ノード名を入力 (CTRL+Q)">${down("#888")}</div>
      <button class="dots" aria-label="ノードを選択">. . .</button>
      <div class="tools"><button aria-label="コード">${ICONS.barCheck()}</button><button aria-label="コード解除">${ICONS.barX()}</button><i></i>
        <button aria-label="In Vivo">${ICONS.barVivo()}</button><i></i><button class="x" aria-label="閉じる">X</button></div>`;
  }
}

/* ---------- Status bar ---------- */
@customElement("status-bar")
class StatusBar extends LitElement {
  static styles = [base, css`
    .status { display: flex; align-items: center; height: 30px; background: #4b3197; color: #fff; padding: 0 16px 0 1px; border-left: 1px solid #222; white-space: nowrap; }
    .status span { display: flex; align-items: center; gap: 2px; }
    .s1 { width: 48px; } .s2 { width: 69px; } .s3 { width: 133px; }
    .zoom { margin-left: auto; display: flex; align-items: center; gap: 7px; }
    .zoom b { width: 40px; text-align: right; font-weight: 400; margin-left: 20px; }
    input { appearance: none; width: 92px; height: 20px; }
    input::-webkit-slider-runnable-track { height: 4px; background: #eee; }
    input::-webkit-slider-thumb { appearance: none; width: 11px; height: 19px; margin-top: -7px; background: #1177d9; clip-path: polygon(0 0, 100% 0, 100% 74%, 50% 100%, 0 74%); }
    .strip { height: 2px; background: linear-gradient(90deg, #05070d 49px, #ccc 49px, #ccc 393px, #05070d 393px, #05070d 591px, #3a3d45 591px, #3a3d45 639px, #05070d 639px); }
  `];
  render() {
    return html`
      <div class="status">
        <span class="s1">${ICONS.person()}HL</span><span class="s2">39 アイテム</span><span class="s3">ファイル: 1&nbsp; リファレンス: 6</span><span>${ICONS.filter()}未フィルタ</span>
        <div class="zoom">${icon(8, 2, svg`<path d="M0 1h8" stroke="#fff" stroke-width="2"/>`)}
          <input type="range" aria-label="ズーム" min="0" max="100" value="49">
          ${icon(8, 8, svg`<path d="M0 4h8M4 0v8" stroke="#fff" stroke-width="2"/>`)}<b>100%</b></div>
      </div>
      <div class="strip"></div>`;
  }
}

@customElement("app-root")
class AppRoot extends LitElement {
  static styles = css`
    :host {
      display: grid; grid-template-rows: 48px 96px 1fr auto; height: 100vh; overflow: hidden; background: #fff; color: #000;
      font-family: "Noto Sans", "Noto Sans CJK JP", sans-serif; font-size: 11px; font-feature-settings: "palt";
    }
    main { display: grid; grid-template: 1fr auto / 218px 274px 1fr; min-height: 0; }
    nav-pane { grid-row: 1 / 3; }
    coding-bar { grid-column: 2 / 4; }
  `;
  render() {
    return html`<title-area></title-area><ribbon-bar></ribbon-bar>
      <main><nav-pane></nav-pane><node-list></node-list><detail-view></detail-view><coding-bar></coding-bar></main>
      <status-bar></status-bar>`;
  }
}
